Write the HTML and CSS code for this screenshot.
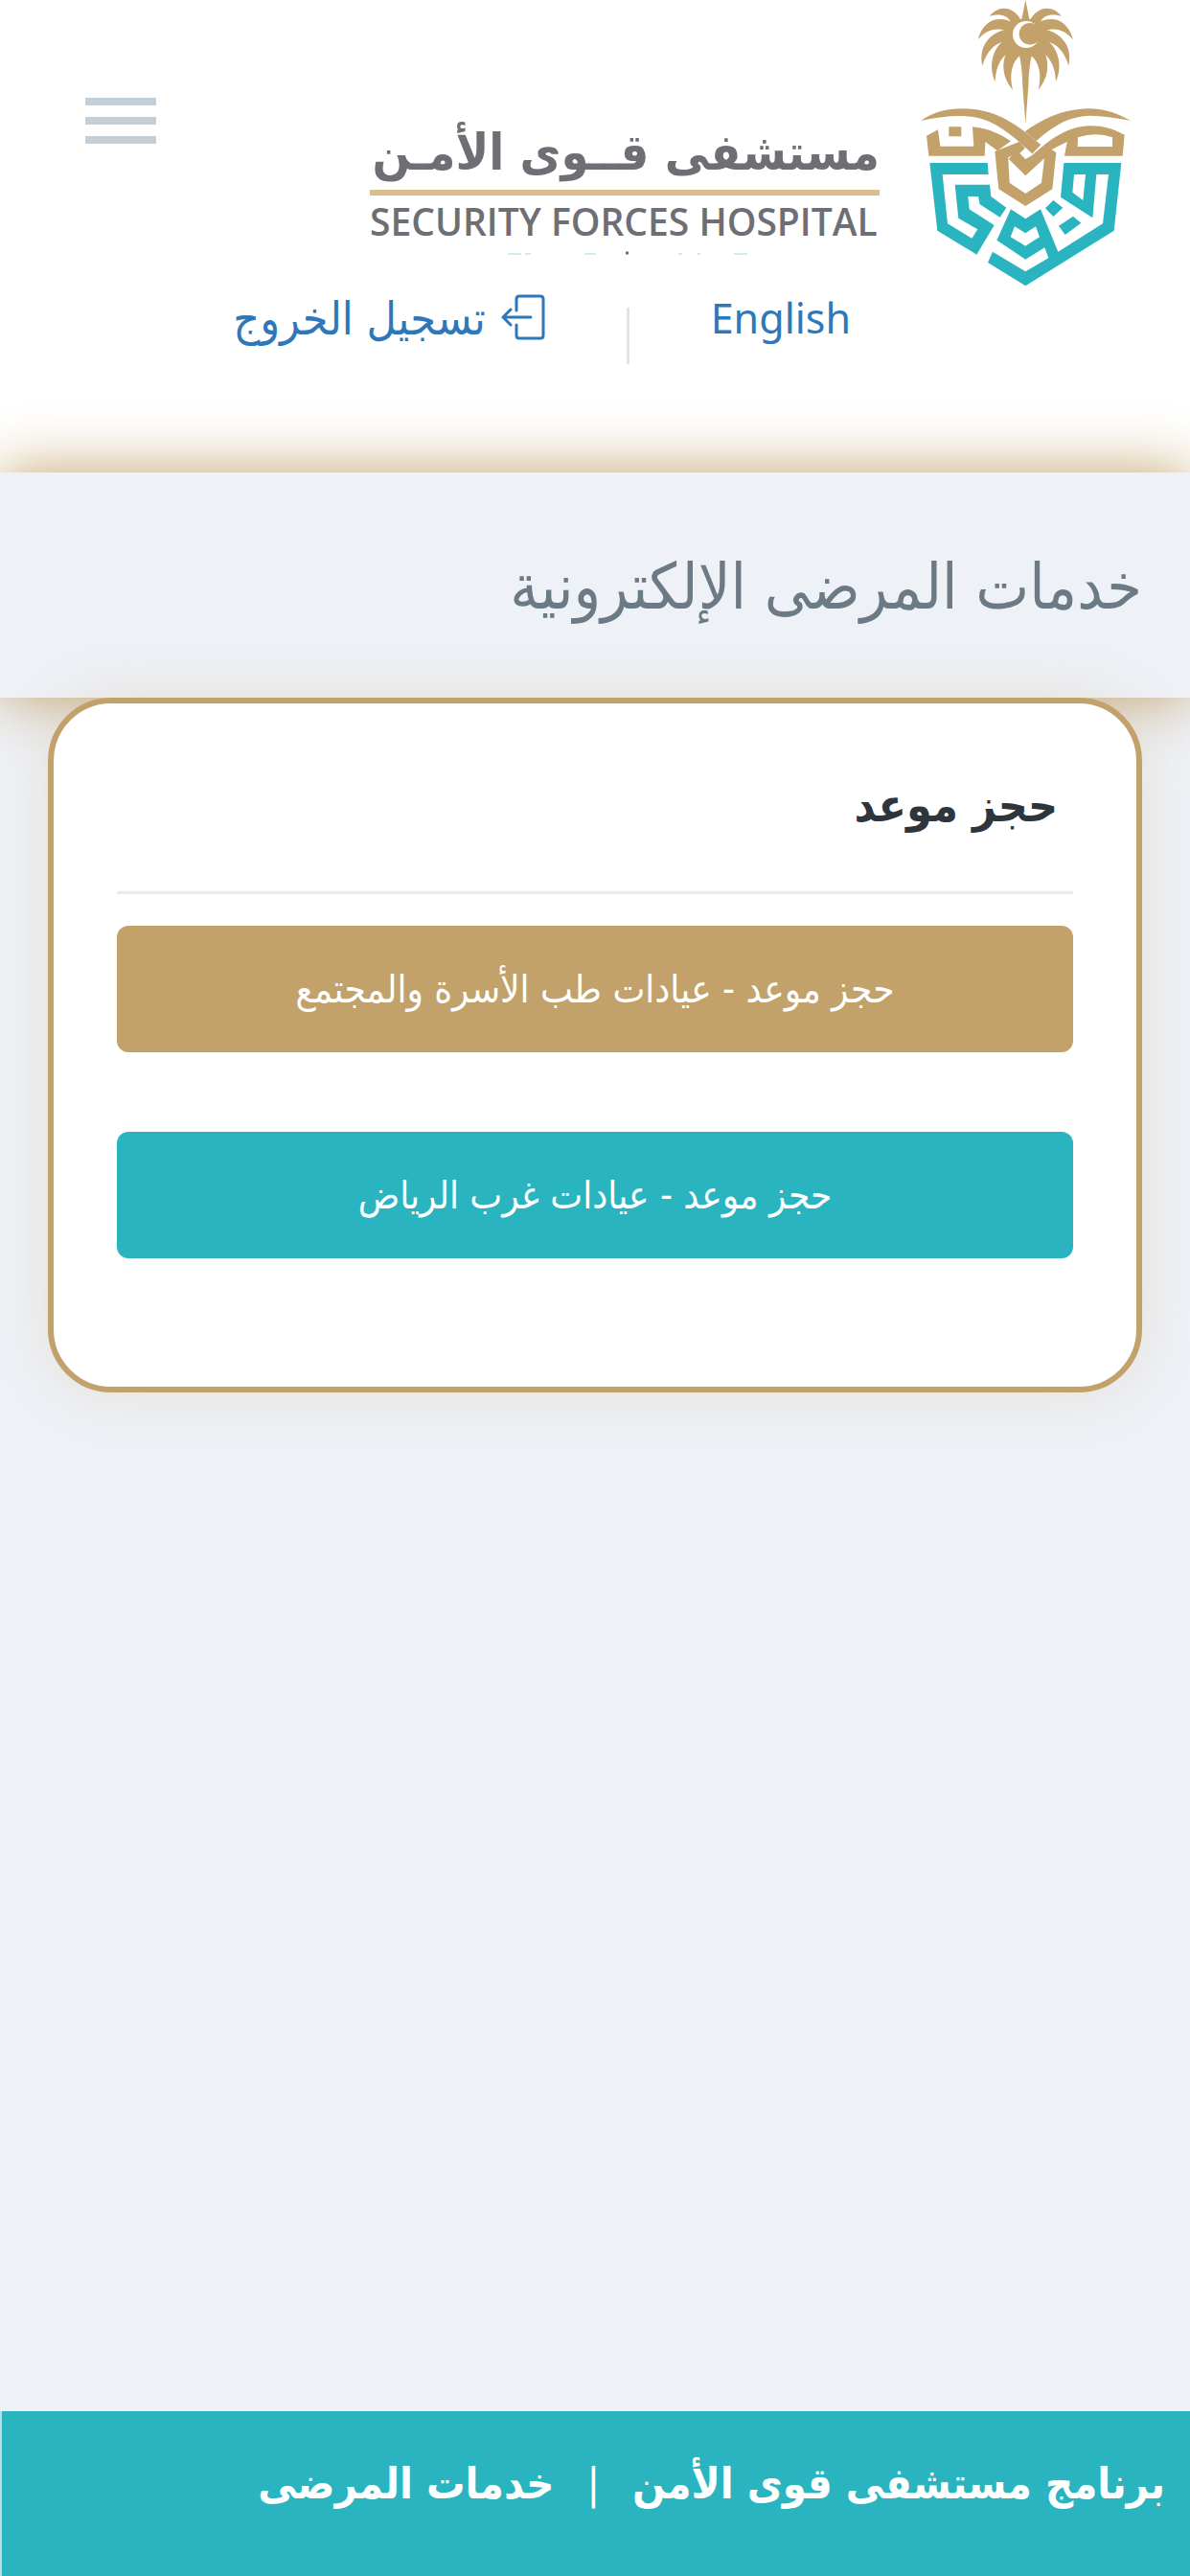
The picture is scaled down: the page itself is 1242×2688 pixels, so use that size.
FILE: index.html
```html
<!DOCTYPE html>
<html lang="ar" dir="rtl">
<head>
<meta charset="utf-8">
<meta name="viewport" content="width=device-width, initial-scale=1">
<title>خدمات المرضى الإلكترونية</title>
<link rel="stylesheet" href="styles.css">
</head>
<body>
<header class="header">
  <div class="brand-row">
    <svg class="emblem" viewBox="60 0 660 900" aria-hidden="true">
      <g class="gold">
        <g id="fronds">
          <path d="M378 70C350 12 300 18 276 50C310 42 330 48 340 66L360 90Z"/>
          <path d="M352 72C300 45 255 65 239 124C265 92 300 86 325 96L350 110Z"/>
          <path d="M338 90C275 100 240 145 253 206C265 165 285 138 325 128Z"/>
          <path d="M332 118C285 145 270 205 293 256C294 210 312 172 352 154Z"/>
          <path d="M340 145C310 185 312 240 348 281C336 235 345 192 374 172Z"/>
        </g>
        <use href="#fronds" transform="translate(776 0) scale(-1 1)"/>
        <circle cx="388" cy="118" r="60"/>
        <path d="M388 0L374 70H402ZM366 160H410Q398 210 397 270L388 388L379 270Q378 210 366 160Z"/>
      </g>
      <circle class="white" cx="390" cy="108" r="42"/>
      <circle class="gold" cx="402" cy="106" r="34"/>
      <g class="gold">
        <path d="M60 378C100 350 145 340 190 340C285 340 345 375 436 453L408 482C330 405 270 363 185 363C140 363 100 369 60 378Z"/>
        <path d="M718 378C670 352 630 340 585 340C500 342 440 374 386 412L422 441C470 398 520 364 590 362C640 364 680 370 718 378Z"/>
        <path d="M78 425L114 406L121 458H226L222 397C275 402 310 420 342 442L300 472L262 444L260 488H85ZM148 397H187V427H148Z"/>
        <path fill-rule="evenodd" d="M698 422C660 402 625 393 590 394C520 396 470 432 408 487L388 498L371 480L405 484L368 444L292 474L304 592L388 645L472 592L484 478L470 468L518 444L510 488H692ZM552 430Q610 412 660 430V459H551ZM345 486L334 500L338 572L388 606L438 572L447 496L388 550L332 494Z"/>
      </g>
      <path class="white" d="M388 462L408 480L388 497L370 480Z"/>
      <g class="teal" fill-rule="evenodd">
        <path d="M88 510H269L272 546H128L144 700L220 746L238 718L178 683L167 578H276L280 615L328 650L308 680L245 640L240 615H208L212 655L290 705L235 797L112 722Z"/>
        <path d="M285 788L388 850L460 808L448 775L388 812L298 752L342 655L388 685L435 655L490 788L630 700L648 546H610L598 682L498 617L508 510H688L665 722L388 895L270 822ZM540 546H576L568 627L535 602ZM354 709L388 730L420 709L432 742L388 770L341 742Z"/>
        <path d="M475 627L505 650L475 678L450 652ZM537 677L562 698L512 735L492 707Z"/>
      </g>
    </svg>
    <div class="wordmark">
      <span class="name-ar">مستشفى قــوى الأمـن</span>
      <span class="name-en" lang="en" dir="ltr">SECURITY FORCES HOSPITAL</span>
      <svg class="tagline" viewBox="0 0 250 4" aria-hidden="true">
        <path d="M0 3H14M18 3H24M80 3H92M178 3H182M198 3H201M236 3H250" stroke="#c9edf1" stroke-width="2"/>
        <path d="M123 2H126" stroke="#6d6f74" stroke-width="3"/>
      </svg>
    </div>
    <button class="menu" type="button" aria-label="القائمة"><span></span><span></span><span></span></button>
  </div>
  <nav class="account">
    <a href="#" lang="en">English</a>
    <span class="separator"></span>
    <a href="#" class="logout">
      <svg class="exit-icon" viewBox="0 0 46 48" aria-hidden="true"><path d="M16 17V5Q16 2 19 2H41Q44 2 44 5V43Q44 46 41 46H19Q16 46 16 43V32M31 24H2M10 16L2 24L10 32"/></svg>
      تسجيل الخروج
    </a>
  </nav>
</header>
<div class="title-bar"><h1>خدمات المرضى الإلكترونية</h1></div>
<main class="content">
  <section class="card">
    <h2>حجز موعد</h2>
    <button class="action family" type="button">حجز موعد - عيادات طب الأسرة والمجتمع</button>
    <button class="action west" type="button">حجز موعد - عيادات غرب الرياض</button>
  </section>
</main>
<footer class="footer">
  <span>برنامج مستشفى قوى الأمن</span><span class="bar">|</span><span>خدمات المرضى</span>
</footer>
</body>
</html>
```
FILE: styles.css
```css
* { box-sizing: border-box; }

body {
  margin: 0;
  min-height: 100vh;
  display: flex;
  flex-direction: column;
  background: #eef1f6;
  font-family: "DejaVu Sans Condensed", "DejaVu Sans", sans-serif;
}

.header { background: #fff; padding-bottom: 113px; }

.brand-row {
  display: flex;
  align-items: flex-start;
  padding: 0 60px 0 89px;
}

.emblem { width: 222px; height: 300px; flex: none; }
.gold { fill: #c2a16a; }
.teal { fill: #29b4c0; }
.white { fill: #fff; }

.wordmark {
  display: flex;
  flex-direction: column;
  width: 532px;
  margin: 120px 42px 0 0;
  color: #6d6f74;
}

.name-ar {
  height: 84px;
  border-bottom: 6px solid #d9bd8f;
  font-size: 52px;
  line-height: 78px;
  font-weight: 700;
  white-space: nowrap;
}

.name-en {
  font-family: "Open Sans", sans-serif;
  font-size: 39px;
  font-weight: 600;
  line-height: 54px;
  white-space: nowrap;
}

.tagline { width: 250px; height: 4px; margin: 4px 138px 0 0; }

.menu {
  display: flex;
  flex-direction: column;
  gap: 12px;
  width: 74px;
  margin: 102px auto 0 0;
  padding: 0;
  border: 0;
  background: none;
}

.menu span { width: 100%; height: 8px; background: #c4ced6; }

.account {
  display: flex;
  align-items: flex-start;
  gap: 85px;
  padding-right: 354px;
  line-height: 64px;
}

.account a {
  color: #2e77b8;
  font-size: 48px;
  text-decoration: none;
  white-space: nowrap;
}

.account a[lang="en"] { font-family: "Noto Sans", sans-serif; font-size: 43px; }

.separator { width: 3px; height: 59px; margin-top: 21px; background: #dfe4ea; }

.logout { display: flex; gap: 16px; }

.exit-icon {
  width: 46px;
  height: 48px;
  margin-top: 7px;
  fill: none;
  stroke: #2e77b8;
  stroke-width: 3;
  stroke-linecap: round;
}

.title-bar {
  padding: 72px 50px 67px;
  background: #eef1f6;
  box-shadow: 0 0 60px #c2a16a;
}

.title-bar h1 {
  margin: 0;
  color: #6b7a84;
  font-size: 66px;
  font-weight: 400;
  line-height: 96px;
}

.content { flex: 1; padding: 0 50px; }

.card {
  position: relative;
  padding: 64px 66px 134px;
  border: 6px solid #c2a16a;
  border-radius: 66px;
  background: #fff;
  box-shadow: 0 0 60px rgba(194, 161, 106, 0.2);
}

.card h2 {
  margin: 0 0 33px;
  padding: 0 16px 48px;
  border-bottom: 3px solid #ebebeb;
  color: #2f353c;
  font-size: 48px;
  line-height: 84px;
}

.action {
  display: block;
  width: 100%;
  height: 132px;
  border: 0;
  border-radius: 12px;
  color: #fff;
  font-family: inherit;
  font-size: 40px;
}

.action + .action { margin-top: 83px; }
.family { background: #c2a16a; }
.west { background: #29b4c0; }

.footer {
  display: flex;
  align-items: flex-start;
  gap: 34px;
  height: 172px;
  padding: 40px 26px 0;
  border-left: 2px solid #b9dde3;
  background: #29b4c0;
  color: #fff;
  font-size: 45px;
  font-weight: 700;
  line-height: 72px;
  white-space: nowrap;
}

.footer .bar { font-weight: 400; }
```
